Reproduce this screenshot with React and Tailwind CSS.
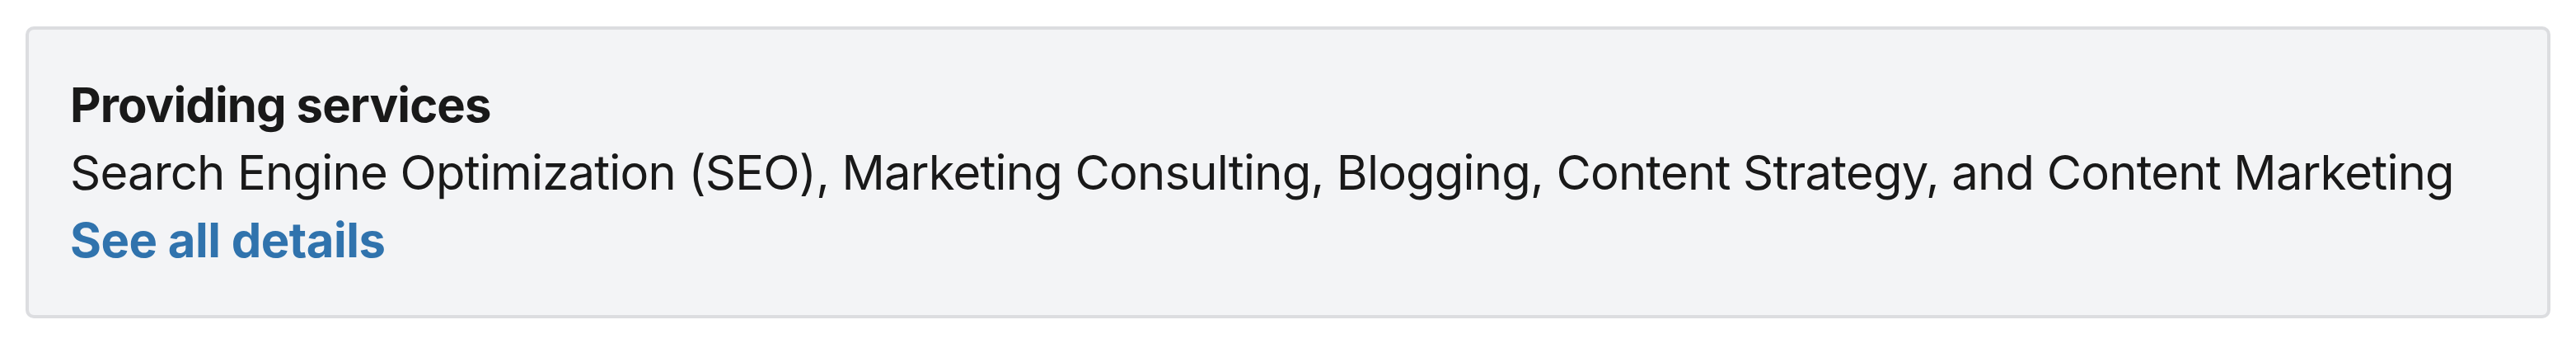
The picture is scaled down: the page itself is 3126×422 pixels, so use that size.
export default function App() {
  return (
    <div className="bg-white w-full h-[422px] pt-[32px] px-[31px]" style={{ fontFamily: 'Inter, "Noto Sans", sans-serif' }}>
      <section className="bg-[#f3f4f6] border-[4px] border-[#dcdde0] rounded-[10px] h-[354px] pl-[50px] pr-[48px] pt-[50px] text-[58px] leading-[82px] text-[#191919]">
        <h3 className="font-bold tracking-[-0.9px]">Providing services</h3>
        <p className="tracking-[-0.82px] whitespace-nowrap">
          Search Engine Optimization (SEO), Marketing Consulting, Blogging, Content Strategy, and Content Marketing
        </p>
        <a href="#" className="font-bold tracking-[-0.5px] text-[#3073ad]">See all details</a>
      </section>
    </div>
  );
}
